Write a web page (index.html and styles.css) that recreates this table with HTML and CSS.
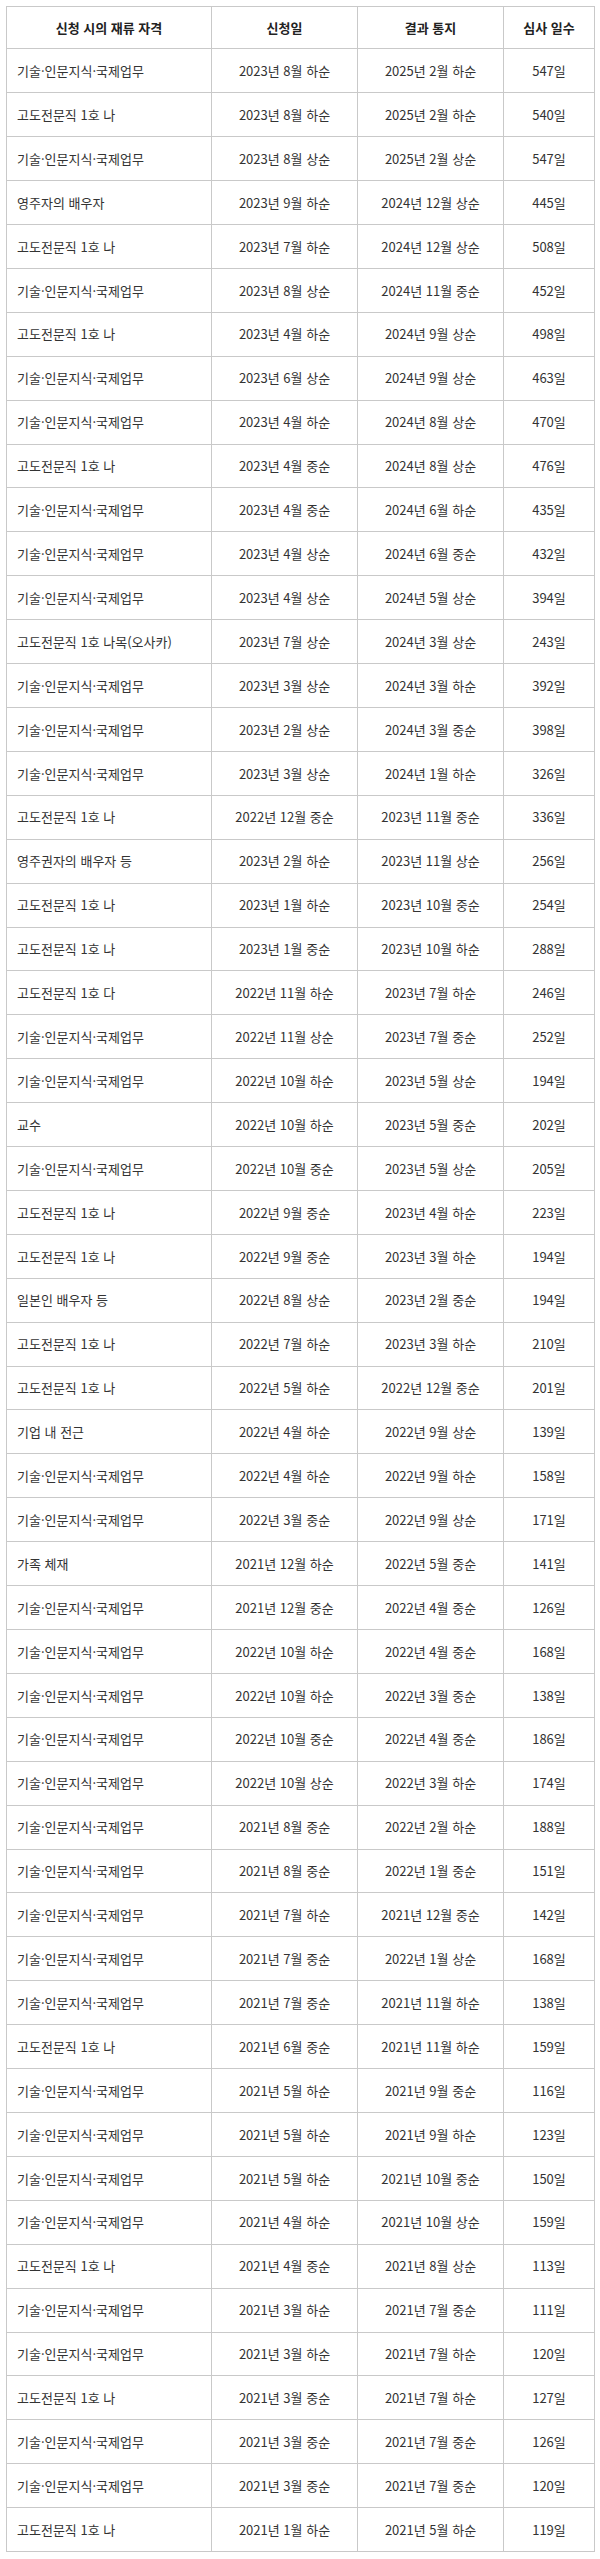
FILE: index.html
```html
<!DOCTYPE html>
<html lang="ko">
<head>
<meta charset="utf-8">
<title>재류 자격 심사 일수</title>
<link rel="stylesheet" href="styles.css">
</head>
<body>
<table class="tbl">
<colgroup><col class="c1"><col class="c2"><col class="c3"><col class="c4"></colgroup>
<thead>
<tr><th>신청 시의 재류 자격</th><th>신청일</th><th>결과 통지</th><th>심사 일수</th></tr>
</thead>
<tbody>
<tr><td>기술·인문지식·국제업무</td><td>2023년 8월 하순</td><td>2025년 2월 하순</td><td>547일</td></tr>
<tr><td>고도전문직 1호 나</td><td>2023년 8월 하순</td><td>2025년 2월 하순</td><td>540일</td></tr>
<tr><td>기술·인문지식·국제업무</td><td>2023년 8월 상순</td><td>2025년 2월 상순</td><td>547일</td></tr>
<tr><td>영주자의 배우자</td><td>2023년 9월 하순</td><td>2024년 12월 상순</td><td>445일</td></tr>
<tr><td>고도전문직 1호 나</td><td>2023년 7월 하순</td><td>2024년 12월 상순</td><td>508일</td></tr>
<tr><td>기술·인문지식·국제업무</td><td>2023년 8월 상순</td><td>2024년 11월 중순</td><td>452일</td></tr>
<tr><td>고도전문직 1호 나</td><td>2023년 4월 하순</td><td>2024년 9월 상순</td><td>498일</td></tr>
<tr><td>기술·인문지식·국제업무</td><td>2023년 6월 상순</td><td>2024년 9월 상순</td><td>463일</td></tr>
<tr><td>기술·인문지식·국제업무</td><td>2023년 4월 하순</td><td>2024년 8월 상순</td><td>470일</td></tr>
<tr><td>고도전문직 1호 나</td><td>2023년 4월 중순</td><td>2024년 8월 상순</td><td>476일</td></tr>
<tr><td>기술·인문지식·국제업무</td><td>2023년 4월 중순</td><td>2024년 6월 하순</td><td>435일</td></tr>
<tr><td>기술·인문지식·국제업무</td><td>2023년 4월 상순</td><td>2024년 6월 중순</td><td>432일</td></tr>
<tr><td>기술·인문지식·국제업무</td><td>2023년 4월 상순</td><td>2024년 5월 상순</td><td>394일</td></tr>
<tr><td>고도전문직 1호 나목(오사카)</td><td>2023년 7월 상순</td><td>2024년 3월 상순</td><td>243일</td></tr>
<tr><td>기술·인문지식·국제업무</td><td>2023년 3월 상순</td><td>2024년 3월 하순</td><td>392일</td></tr>
<tr><td>기술·인문지식·국제업무</td><td>2023년 2월 상순</td><td>2024년 3월 중순</td><td>398일</td></tr>
<tr><td>기술·인문지식·국제업무</td><td>2023년 3월 상순</td><td>2024년 1월 하순</td><td>326일</td></tr>
<tr><td>고도전문직 1호 나</td><td>2022년 12월 중순</td><td>2023년 11월 중순</td><td>336일</td></tr>
<tr><td>영주권자의 배우자 등</td><td>2023년 2월 하순</td><td>2023년 11월 상순</td><td>256일</td></tr>
<tr><td>고도전문직 1호 나</td><td>2023년 1월 하순</td><td>2023년 10월 중순</td><td>254일</td></tr>
<tr><td>고도전문직 1호 나</td><td>2023년 1월 중순</td><td>2023년 10월 하순</td><td>288일</td></tr>
<tr><td>고도전문직 1호 다</td><td>2022년 11월 하순</td><td>2023년 7월 하순</td><td>246일</td></tr>
<tr><td>기술·인문지식·국제업무</td><td>2022년 11월 상순</td><td>2023년 7월 중순</td><td>252일</td></tr>
<tr><td>기술·인문지식·국제업무</td><td>2022년 10월 하순</td><td>2023년 5월 상순</td><td>194일</td></tr>
<tr><td>교수</td><td>2022년 10월 하순</td><td>2023년 5월 중순</td><td>202일</td></tr>
<tr><td>기술·인문지식·국제업무</td><td>2022년 10월 중순</td><td>2023년 5월 상순</td><td>205일</td></tr>
<tr><td>고도전문직 1호 나</td><td>2022년 9월 중순</td><td>2023년 4월 하순</td><td>223일</td></tr>
<tr><td>고도전문직 1호 나</td><td>2022년 9월 중순</td><td>2023년 3월 하순</td><td>194일</td></tr>
<tr><td>일본인 배우자 등</td><td>2022년 8월 상순</td><td>2023년 2월 중순</td><td>194일</td></tr>
<tr><td>고도전문직 1호 나</td><td>2022년 7월 하순</td><td>2023년 3월 하순</td><td>210일</td></tr>
<tr><td>고도전문직 1호 나</td><td>2022년 5월 하순</td><td>2022년 12월 중순</td><td>201일</td></tr>
<tr><td>기업 내 전근</td><td>2022년 4월 하순</td><td>2022년 9월 상순</td><td>139일</td></tr>
<tr><td>기술·인문지식·국제업무</td><td>2022년 4월 하순</td><td>2022년 9월 하순</td><td>158일</td></tr>
<tr><td>기술·인문지식·국제업무</td><td>2022년 3월 중순</td><td>2022년 9월 상순</td><td>171일</td></tr>
<tr><td>가족 체재</td><td>2021년 12월 하순</td><td>2022년 5월 중순</td><td>141일</td></tr>
<tr><td>기술·인문지식·국제업무</td><td>2021년 12월 중순</td><td>2022년 4월 중순</td><td>126일</td></tr>
<tr><td>기술·인문지식·국제업무</td><td>2022년 10월 하순</td><td>2022년 4월 중순</td><td>168일</td></tr>
<tr><td>기술·인문지식·국제업무</td><td>2022년 10월 하순</td><td>2022년 3월 중순</td><td>138일</td></tr>
<tr><td>기술·인문지식·국제업무</td><td>2022년 10월 중순</td><td>2022년 4월 중순</td><td>186일</td></tr>
<tr><td>기술·인문지식·국제업무</td><td>2022년 10월 상순</td><td>2022년 3월 하순</td><td>174일</td></tr>
<tr><td>기술·인문지식·국제업무</td><td>2021년 8월 중순</td><td>2022년 2월 하순</td><td>188일</td></tr>
<tr><td>기술·인문지식·국제업무</td><td>2021년 8월 중순</td><td>2022년 1월 중순</td><td>151일</td></tr>
<tr><td>기술·인문지식·국제업무</td><td>2021년 7월 하순</td><td>2021년 12월 중순</td><td>142일</td></tr>
<tr><td>기술·인문지식·국제업무</td><td>2021년 7월 중순</td><td>2022년 1월 상순</td><td>168일</td></tr>
<tr><td>기술·인문지식·국제업무</td><td>2021년 7월 중순</td><td>2021년 11월 하순</td><td>138일</td></tr>
<tr><td>고도전문직 1호 나</td><td>2021년 6월 중순</td><td>2021년 11월 하순</td><td>159일</td></tr>
<tr><td>기술·인문지식·국제업무</td><td>2021년 5월 하순</td><td>2021년 9월 중순</td><td>116일</td></tr>
<tr><td>기술·인문지식·국제업무</td><td>2021년 5월 하순</td><td>2021년 9월 하순</td><td>123일</td></tr>
<tr><td>기술·인문지식·국제업무</td><td>2021년 5월 하순</td><td>2021년 10월 중순</td><td>150일</td></tr>
<tr><td>기술·인문지식·국제업무</td><td>2021년 4월 하순</td><td>2021년 10월 상순</td><td>159일</td></tr>
<tr><td>고도전문직 1호 나</td><td>2021년 4월 중순</td><td>2021년 8월 상순</td><td>113일</td></tr>
<tr><td>기술·인문지식·국제업무</td><td>2021년 3월 하순</td><td>2021년 7월 중순</td><td>111일</td></tr>
<tr><td>기술·인문지식·국제업무</td><td>2021년 3월 하순</td><td>2021년 7월 하순</td><td>120일</td></tr>
<tr><td>고도전문직 1호 나</td><td>2021년 3월 중순</td><td>2021년 7월 하순</td><td>127일</td></tr>
<tr><td>기술·인문지식·국제업무</td><td>2021년 3월 중순</td><td>2021년 7월 중순</td><td>126일</td></tr>
<tr><td>기술·인문지식·국제업무</td><td>2021년 3월 중순</td><td>2021년 7월 중순</td><td>120일</td></tr>
<tr><td>고도전문직 1호 나</td><td>2021년 1월 하순</td><td>2021년 5월 하순</td><td>119일</td></tr>
</tbody>
</table>
</body>
</html>
```

FILE: styles.css
```css
html, body {
  margin: 0;
  padding: 0;
  background: #fff;
}

body {
  padding: 5.5px 0 0 6px;
  font-family: "Noto Sans CJK KR", "Noto Sans", sans-serif;
  font-size: 13px;
  color: #333;
}

.tbl {
  table-layout: fixed;
  width: 588px;
  border-collapse: separate;
  border-spacing: 0;
  border-top: 1px solid #c9c9c9;
  border-left: 1px solid #c9c9c9;
}

.c1 { width: 205px; }
.c2 { width: 146px; }
.c3 { width: 146px; }
.c4 { width: 91px; }

.tbl tr {
  height: 43.91px;
}

.tbl th,
.tbl td {
  box-sizing: border-box;
  border-right: 1px solid #c9c9c9;
  border-bottom: 1px solid #c9c9c9;
  padding: 0 4px;
  text-align: center;
  vertical-align: middle;
  line-height: 1.2;
  white-space: nowrap;
}

.tbl th {
  font-weight: 700;
  color: #222;
}

.tbl thead tr {
  height: 42.9px;
}

.tbl td:first-child {
  text-align: left;
  padding-left: 10px;
}
```
